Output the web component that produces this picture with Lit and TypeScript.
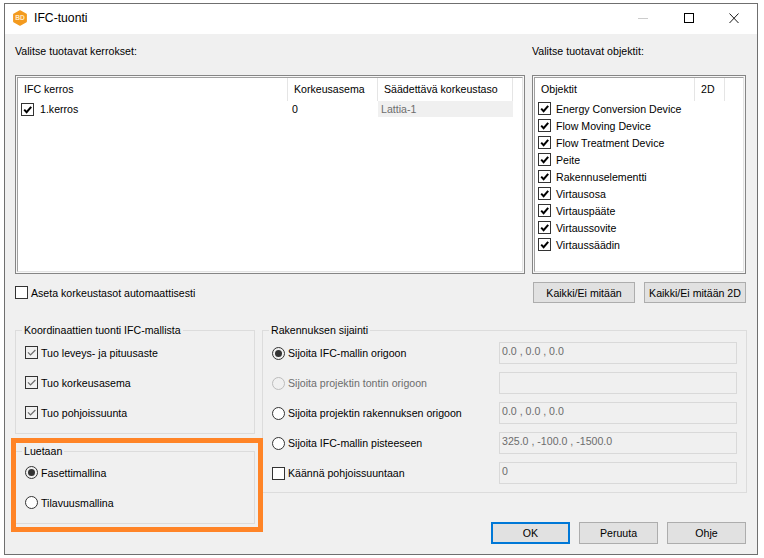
import { LitElement, html, css, svg } from "lit";
import { customElement } from "lit/decorators.js";

const CHECK = svg`<path d="M2.2 5.6 L4.6 8.2 L9.2 2.8" fill="none" stroke="currentColor" stroke-width="2"/>`;
const CHECK_THIN = svg`<path d="M2 5.4 L4.5 8 L9.4 3" fill="none" stroke="currentColor" stroke-width="1.2"/>`;

@customElement("app-root")
export class AppRoot extends LitElement {
  static styles = css`
    :host { display: block; width: 764px; height: 558px; background: #fff; box-sizing: border-box; padding: 3px 6px 3px 4px; font: 10.6px "Liberation Sans", Arial, sans-serif; color: #000; overflow: hidden; }
    * { box-sizing: border-box; }
    .win { height: 552px; border: 1px solid #6f6f6f; background: #f0f0f0; display: flex; flex-direction: column; position: relative; }
    .title { height: 30px; background: #fff; display: flex; align-items: center; padding: 0 1px 2px 7px; flex: none; }
    .title .name { font-size: 12.2px; margin-left: 6px; }
    .ctrls { margin-left: auto; display: flex; }
    .ctrl { width: 45px; display: flex; align-items: center; justify-content: center; }
    .body { padding: 0 10px; flex: 1; display: flex; flex-direction: column; }
    .heads { display: flex; height: 35px; padding-top: 10px; letter-spacing: 0.03px; }
    .heads .l { width: 517px; }
    .heads span { line-height: 14px; }
    .tables { display: flex; gap: 7px; margin-top: 6px; height: 199px; }
    .tbl { border: 1px solid #858585; padding: 1px; background: #f7f7f7; flex: none; }
    .tbl.left { width: 510px; }
    .tbl.right { width: 214px; }
    .tbl-in { border: 1px solid #e3e3e3; border-top-color: #a0a0a0; border-left-color: #a0a0a0; height: 100%; background: #fff; }
    .hrow, .drow { display: flex; }
    .hrow { height: 23px; }
    .hrow > div { line-height: 23px; padding-left: 6px; border-right: 1px solid #e5e5e5; white-space: nowrap; }
    .drow { height: 16px; line-height: 16px; }
    .c1 { width: 270px; } .c2 { width: 90px; } .c3 { width: 135px; }
    .o1 { width: 160px; } .o2 { width: 30px; }
    .drow .c2 { padding-left: 4px; }
    .drow .c3 { background: #f0f0f0; color: #6d6d6d; padding-left: 3px; }
    .rows { display: flex; flex-direction: column; margin-top: -1px; }
    .orow { height: 17px; display: flex; align-items: center; padding-left: 3px; gap: 5px; white-space: nowrap; }
    .frow { display: flex; align-items: center; gap: 3px; white-space: nowrap; height: 13px; }
    .drow .c1 { display: flex; align-items: center; padding-left: 3px; gap: 6px; }
    .box { width: 13px; height: 13px; border: 1px solid #333; background: #fff; color: #000; flex: none; display: block; }
    .box.soft { background: #f0f0f0; color: #6d6d6d; }
    .box svg { display: block; width: 11px; height: 11px; }
    .radio { width: 13px; height: 13px; border: 1px solid #333; border-radius: 50%; background: #fff; flex: none; display: flex; align-items: center; justify-content: center; }
    .radio.on { background: #f0f0f0; }
    .radio.on::after { content: ""; width: 7px; height: 7px; border-radius: 50%; background: #333; }
    .radio.off { border-color: #bcbcbc; background: #f0f0f0; }
    .dim { color: #6d6d6d; }
    .mid { display: flex; align-items: center; margin-top: 8px; height: 21px; padding-right: 1px; }
    .mid .buttons { margin-left: auto; display: flex; gap: 9px; }
    button { font: inherit; color: #000; background: #e1e1e1; border: 1px solid #adadad; padding: 0; height: 21px; flex: none; white-space: nowrap; }
    .mid button { width: 102px; }
    .low { display: flex; gap: 7px; margin-top: 27px; }
    .lc { width: 240px; flex: none; display: flex; flex-direction: column; gap: 17px; }
    .rc { width: 485px; flex: none; display: flex; flex-direction: column; }
    .grp { position: relative; border: 1px solid #dcdcdc; }
    .legend { position: absolute; left: 6px; top: -7px; background: #f0f0f0; padding: 0 2px; line-height: 13px; white-space: nowrap; }
    .g1 { height: 104px; padding: 15px 0 0 9px; display: flex; flex-direction: column; gap: 17px; }
    .g2 { height: 73px; padding: 14px 0 0 9px; display: flex; flex-direction: column; gap: 17px; }
    .g3 { height: 163px; padding: 11px 9px 0 9px; display: flex; flex-direction: column; gap: 8px; }
    .line { display: flex; align-items: center; height: 22px; }
    .line .frow { width: 227px; }
    .input { width: 238px; height: 22px; border: 1px solid #d9d9d9; background: #f0f0f0; color: #6d6d6d; line-height: 16px; padding-left: 2px; flex: none; }
    .foot { display: flex; gap: 9px; margin-top: 29px; margin-left: 229px; }
    .foot button { width: 79px; height: 22px; }
    .foot .ok { border: 2px solid #0078d7; }
    .hl { position: absolute; left: 6px; top: 434px; width: 252px; height: 94px; border: 5px solid #ff8427; pointer-events: none; }
  `;

  private box(soft = false, checked = true) {
    return html`<span class="box ${soft ? "soft" : ""}">${checked ? html`<svg viewBox="0 0 11 11">${soft ? CHECK_THIN : CHECK}</svg>` : ""}</span>`;
  }

  render() {
    const objs = ["Energy Conversion Device", "Flow Moving Device", "Flow Treatment Device", "Peite", "Rakennuselementti", "Virtausosa", "Virtauspääte", "Virtaussovite", "Virtaussäädin"];
    return html`
      <div class="win">
        <div class="title">
          <svg width="16" height="16" viewBox="0 0 18 18"><path d="M9 1 L16 5 V13 L9 17 L2 13 V5 Z" fill="#f39a1e" stroke="#f39a1e" stroke-linejoin="round" stroke-width="1.5"/><text x="9" y="11.7" font-size="7.5" font-weight="700" fill="#ffe9c8" text-anchor="middle" font-family="Liberation Sans">BD</text></svg>
          <span class="name">IFC-tuonti</span>
          <div class="ctrls">
            <div class="ctrl"><svg width="11" height="11" viewBox="0 0 11 11"><path d="M0 5.5H10" stroke="#ccc"/></svg></div>
            <div class="ctrl"><svg width="11" height="11" viewBox="0 0 11 11"><rect x="1.5" y=".5" width="9" height="9" fill="none" stroke="#000"/></svg></div>
            <div class="ctrl"><svg width="11" height="11" viewBox="0 0 11 11"><path d="M1.5 .5L10.5 10M10.5 .5L1.5 10" stroke="#000" stroke-width=".9"/></svg></div>
          </div>
        </div>
        <div class="body">
          <div class="heads"><span class="l">Valitse tuotavat kerrokset:</span><span>Valitse tuotavat objektit:</span></div>
          <div class="tables">
            <div class="tbl left"><div class="tbl-in">
              <div class="hrow"><div class="c1">IFC kerros</div><div class="c2">Korkeusasema</div><div class="c3">Säädettävä korkeustaso</div></div>
              <div class="drow"><div class="c1">${this.box()}<span>1.kerros</span></div><div class="c2">0</div><div class="c3">Lattia-1</div></div>
            </div></div>
            <div class="tbl right"><div class="tbl-in">
              <div class="hrow"><div class="o1">Objektit</div><div class="o2">2D</div></div>
              <div class="rows">${objs.map((o) => html`<div class="orow">${this.box()}<span>${o}</span></div>`)}</div>
            </div></div>
          </div>
          <div class="mid">
            <div class="frow">${this.box(false, false)}<span>Aseta korkeustasot automaattisesti</span></div>
            <div class="buttons"><button>Kaikki/Ei mitään</button><button>Kaikki/Ei mitään 2D</button></div>
          </div>
          <div class="low">
            <div class="lc">
              <div class="grp g1"><span class="legend">Koordinaattien tuonti IFC-mallista</span>
                <div class="frow">${this.box(true)}<span>Tuo leveys- ja pituusaste</span></div>
                <div class="frow">${this.box(true)}<span>Tuo korkeusasema</span></div>
                <div class="frow">${this.box(true)}<span>Tuo pohjoissuunta</span></div>
              </div>
              <div class="grp g2"><span class="legend">Luetaan</span>
                <div class="frow"><span class="radio on"></span><span>Fasettimallina</span></div>
                <div class="frow"><span class="radio"></span><span>Tilavuusmallina</span></div>
              </div>
            </div>
            <div class="rc">
              <div class="grp g3"><span class="legend">Rakennuksen sijainti</span>
                <div class="line"><div class="frow"><span class="radio on"></span><span>Sijoita IFC-mallin origoon</span></div><div class="input">0.0 , 0.0 , 0.0</div></div>
                <div class="line"><div class="frow"><span class="radio off"></span><span class="dim">Sijoita projektin tontin origoon</span></div><div class="input"></div></div>
                <div class="line"><div class="frow"><span class="radio"></span><span>Sijoita projektin rakennuksen origoon</span></div><div class="input">0.0 , 0.0 , 0.0</div></div>
                <div class="line"><div class="frow"><span class="radio"></span><span>Sijoita IFC-mallin pisteeseen</span></div><div class="input">325.0 , -100.0 , -1500.0</div></div>
                <div class="line"><div class="frow">${this.box(false, false)}<span>Käännä pohjoissuuntaan</span></div><div class="input">0</div></div>
              </div>
              <div class="foot"><button class="ok">OK</button><button>Peruuta</button><button>Ohje</button></div>
            </div>
          </div>
        </div>
        <div class="hl"></div>
      </div>
    `;
  }
}
